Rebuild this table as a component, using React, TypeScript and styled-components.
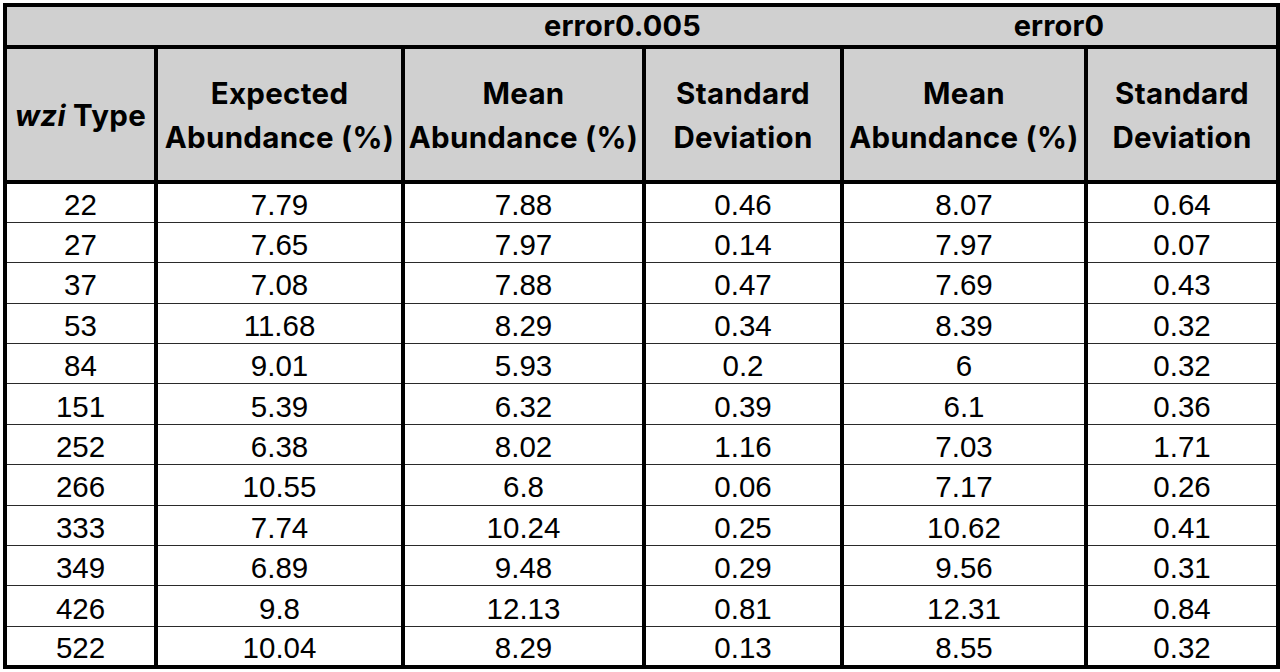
import React from "react";
import styled, { createGlobalStyle } from "styled-components";

const Global = createGlobalStyle`
  html, body { margin: 0; padding: 0; background: #ffffff; }
  body { width: 1280px; height: 672px; overflow: hidden; }
`;

const Page = styled.div`
  padding: 3px 0 0 3px;
`;

const Table = styled.table`
  border-collapse: collapse;
  table-layout: fixed;
  width: 1273px;
  border: 4px solid #000;
`;

const GroupRow = styled.tr`
  height: 42px;
  background: #d0d0d0;
`;

const GroupCell = styled.th`
  padding: 0;
  font-family: "Inter", "Liberation Sans", sans-serif;
  font-weight: 700;
  font-size: 29px;
  letter-spacing: 0.2px;
  line-height: 36px;
  color: #000;
  text-align: center;
  vertical-align: middle;
  border-bottom: 4px solid #000;
`;

const HeadRow = styled.tr`
  height: 135px;
  background: #d0d0d0;
`;

const HeadCell = styled.th`
  padding: 0;
  font-family: "Inter", "Liberation Sans", sans-serif;
  font-weight: 700;
  font-size: 29.5px;
  letter-spacing: 0.3px;
  line-height: 44px;
  color: #000;
  text-align: center;
  vertical-align: middle;
  border: 4px solid #000;
  white-space: nowrap;
`;

const Italic = styled.i`
  font-style: italic;
`;

const DataRow = styled.tr`
  height: 40.4px;
  background: #fff;
`;

const DataCell = styled.td<{ $thin?: boolean }>`
  padding: 4px 0 0 0;
  font-family: "Liberation Sans", Arial, sans-serif;
  font-size: 29.5px;
  color: #000;
  text-align: center;
  vertical-align: middle;
  line-height: 33px;
  border-left: ${(p) => (p.$thin ? "3px" : "4px")} solid #000;
  border-right: ${(p) => (p.$thin ? "3px" : "4px")} solid #000;
  border-top: 1.5px solid #2a2a2a;
  border-bottom: 1.5px solid #2a2a2a;
`;

const rows: string[][] = [
  ["22", "7.79", "7.88", "0.46", "8.07", "0.64"],
  ["27", "7.65", "7.97", "0.14", "7.97", "0.07"],
  ["37", "7.08", "7.88", "0.47", "7.69", "0.43"],
  ["53", "11.68", "8.29", "0.34", "8.39", "0.32"],
  ["84", "9.01", "5.93", "0.2", "6", "0.32"],
  ["151", "5.39", "6.32", "0.39", "6.1", "0.36"],
  ["252", "6.38", "8.02", "1.16", "7.03", "1.71"],
  ["266", "10.55", "6.8", "0.06", "7.17", "0.26"],
  ["333", "7.74", "10.24", "0.25", "10.62", "0.41"],
  ["349", "6.89", "9.48", "0.29", "9.56", "0.31"],
  ["426", "9.8", "12.13", "0.81", "12.31", "0.84"],
  ["522", "10.04", "8.29", "0.13", "8.55", "0.32"],
];

const widths = [151, 247, 241, 198, 244, 192];

export default function App() {
  return (
    <Page>
      <Global />
      <Table>
        <colgroup>
          {widths.map((w, i) => (
            <col key={i} style={{ width: w }} />
          ))}
        </colgroup>
        <thead>
          <GroupRow>
            <GroupCell colSpan={2} />
            <GroupCell colSpan={2}>error0.005</GroupCell>
            <GroupCell colSpan={2}>error0</GroupCell>
          </GroupRow>
          <HeadRow>
            <HeadCell>
              <Italic>wzi</Italic> Type
            </HeadCell>
            <HeadCell>
              Expected
              <br />
              Abundance (%)
            </HeadCell>
            <HeadCell>
              Mean
              <br />
              Abundance (%)
            </HeadCell>
            <HeadCell>
              Standard
              <br />
              Deviation
            </HeadCell>
            <HeadCell>
              Mean
              <br />
              Abundance (%)
            </HeadCell>
            <HeadCell>
              Standard
              <br />
              Deviation
            </HeadCell>
          </HeadRow>
        </thead>
        <tbody>
          {rows.map((r, i) => (
            <DataRow key={i}>
              {r.map((v, j) => (
                <DataCell key={j} $thin={j === 3}>
                  {v}
                </DataCell>
              ))}
            </DataRow>
          ))}
        </tbody>
      </Table>
    </Page>
  );
}
